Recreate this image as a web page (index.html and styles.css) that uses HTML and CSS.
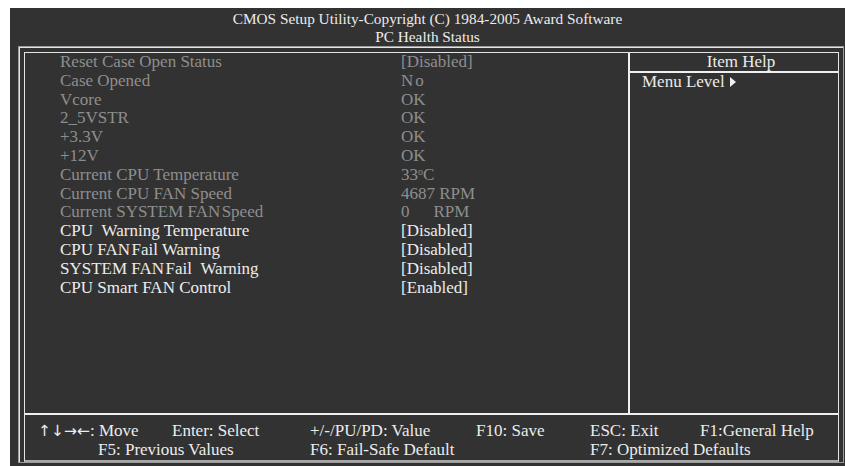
FILE: index.html
```html
<!DOCTYPE html>
<html lang="en">

<head>
    <meta charset="UTF-8">
    <meta name="viewport" content="width=device-width, initial-scale=1.0">
    <title>PC Health Status</title>
    <link rel="stylesheet" href="styles.css">
</head>

<body>
    <div class="screen">
        <div class="title">
            <div>CMOS Setup Utility-Copyright (C) 1984-2005 Award Software</div>
            <div>PC Health Status</div>
        </div>
        <div class="frame">
            <div class="inner">
                <div class="main">
                    <div class="items">
                        <div class="row dim"><span class="label">Reset Case Open Status</span><span class="value">[Disabled]</span></div>
                        <div class="row dim"><span class="label">Case Opened</span><span class="value wide">No</span></div>
                        <div class="row dim"><span class="label">Vcore</span><span class="value">OK</span></div>
                        <div class="row dim"><span class="label">2_5VSTR</span><span class="value">OK</span></div>
                        <div class="row dim"><span class="label">+3.3V</span><span class="value">OK</span></div>
                        <div class="row dim"><span class="label">+12V</span><span class="value">OK</span></div>
                        <div class="row dim"><span class="label">Current CPU Temperature</span><span class="value">33<span class="deg">o</span>C</span></div>
                        <div class="row dim"><span class="label">Current CPU FAN Speed</span><span class="value">4687 RPM</span></div>
                        <div class="row dim"><span class="label">Current SYSTEM FAN&#8202;Speed</span><span class="value">0<span class="gap"></span>RPM</span></div>
                        <div class="row"><span class="label">CPU &nbsp;Warning Temperature</span><span class="value">[Disabled]</span></div>
                        <div class="row"><span class="label">CPU FAN&#8202;Fail Warning</span><span class="value">[Disabled]</span></div>
                        <div class="row"><span class="label">SYSTEM FAN&#8202;Fail &nbsp;Warning</span><span class="value">[Disabled]</span></div>
                        <div class="row"><span class="label">CPU Smart FAN Control</span><span class="value">[Enabled]</span></div>
                    </div>
                    <div class="help">
                        <div class="help-head">Item Help</div>
                        <div class="help-body">Menu Level <span class="arrow"></span></div>
                    </div>
                </div>
                <div class="keys">
                    <span><span class="arrows">&#8593;&#8595;&#8594;&#8592;</span>: Move</span>
                    <span>Enter: Select</span>
                    <span>+/-/PU/PD: Value</span>
                    <span>F10: Save</span>
                    <span>ESC: Exit</span>
                    <span>F1:General Help</span>
                    <span class="f5">F5: Previous Values</span>
                    <span class="f6">F6: Fail-Safe Default</span>
                    <span class="f7">F7: Optimized Defaults</span>
                </div>
            </div>
        </div>
    </div>
</body>

</html>
```

FILE: styles.css
```css
body {
    margin: 0;
    background-color: #ffffff;
    font-family: "Liberation Serif", "Times New Roman", serif;
    font-size: 17px;
}

.screen {
    margin: 8px 0 0 10px;
    height: 458px;
    background-color: #323232;
    color: #ececec;
    display: flex;
    flex-direction: column;
}

.title {
    padding-top: 2px;
    font-size: 15.3px;
    line-height: 18px;
    text-align: center;
}

.frame {
    margin: 0 1px 3px 8px;
    flex: 1;
    border: 1px solid #9a9a9a;
    box-shadow: inset 1px 1px 0 #e4e4e4;
    padding: 5px 4px 0 5px;
    display: flex;
}

.inner {
    flex: 1;
    border: 1px solid #e4e4e4;
    border-bottom: 2px solid #a8a8a8;
    display: flex;
    flex-direction: column;
}

.main {
    flex: 1;
    display: grid;
    grid-template-columns: 605px 1fr;
    border-bottom: 2px solid #f0f0f0;
}

.items {
    border-right: 2px solid #f0f0f0;
    padding-left: 35px;
}

.row {
    display: flex;
    height: 18.8px;
    line-height: 18.8px;
}

.row.dim {
    color: #8e8e8e;
}

.label {
    width: 341px;
}

.value.wide {
    letter-spacing: 2px;
}

.deg {
    font-size: 10px;
    line-height: 0;
    vertical-align: 5px;
}

.gap {
    display: inline-block;
    width: 24px;
}

.help-head {
    line-height: 18px;
    text-align: center;
    border-bottom: 2px solid #f0f0f0;
    padding-left: 14px;
}

.help-body {
    padding-left: 12px;
    line-height: 18px;
}

.arrow {
    display: inline-block;
    margin-left: 1px;
    border-left: 6px solid #f0f0f0;
    border-top: 5px solid transparent;
    border-bottom: 5px solid transparent;
    vertical-align: 0;
}

.keys {
    height: 45px;
    padding: 7px 0 0 13px;
    box-sizing: border-box;
    display: grid;
    grid-template-columns: 134px 138px 166px 114px 110px 1fr;
    line-height: 18px;
}

.arrows {
    font-family: "DejaVu Sans", sans-serif;
    font-size: 15.5px;
    line-height: 0;
}

.keys .f5 {
    grid-column: 1 / 3;
    padding-left: 60px;
}

.keys .f6 {
    grid-column: 3 / 5;
}

.keys .f7 {
    grid-column: 5 / 7;
}
```
